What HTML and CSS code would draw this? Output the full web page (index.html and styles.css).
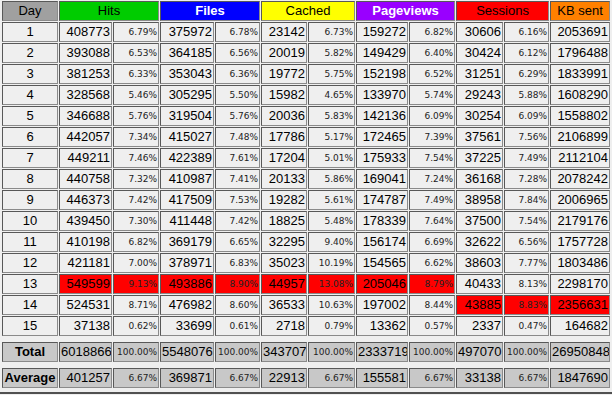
FILE: index.html
```html
<!DOCTYPE html>
<html>
<head>
<meta charset="utf-8">
<title>Daily Statistics</title>
<link rel="stylesheet" href="styles.css">
</head>
<body>
<div class="wrap">
<table class="stats">
<colgroup>
<col class="c-day"><col class="c-hn"><col class="c-hp"><col class="c-fn"><col class="c-fp"><col class="c-cn"><col class="c-cp"><col class="c-pn"><col class="c-pp"><col class="c-sn"><col class="c-sp"><col class="c-kb">
</colgroup>
<thead>
<tr>
<th class="h-day">Day</th>
<th colspan="2" class="h-hits">Hits</th>
<th colspan="2" class="h-files">Files</th>
<th colspan="2" class="h-cached">Cached</th>
<th colspan="2" class="h-pv">Pageviews</th>
<th colspan="2" class="h-sess">Sessions</th>
<th class="h-kb">KB sent</th>
</tr>
</thead>
<tbody>
<tr><td class="day">1</td><td class="n">408773</td><td class="p">6.79%</td><td class="n">375972</td><td class="p">6.78%</td><td class="n">23142</td><td class="p">6.73%</td><td class="n">159272</td><td class="p">6.82%</td><td class="n">30606</td><td class="p">6.16%</td><td class="n">2053691</td></tr>
<tr><td class="day">2</td><td class="n">393088</td><td class="p">6.53%</td><td class="n">364185</td><td class="p">6.56%</td><td class="n">20019</td><td class="p">5.82%</td><td class="n">149429</td><td class="p">6.40%</td><td class="n">30424</td><td class="p">6.12%</td><td class="n">1796488</td></tr>
<tr><td class="day">3</td><td class="n">381253</td><td class="p">6.33%</td><td class="n">353043</td><td class="p">6.36%</td><td class="n">19772</td><td class="p">5.75%</td><td class="n">152198</td><td class="p">6.52%</td><td class="n">31251</td><td class="p">6.29%</td><td class="n">1833991</td></tr>
<tr><td class="day">4</td><td class="n">328568</td><td class="p">5.46%</td><td class="n">305295</td><td class="p">5.50%</td><td class="n">15982</td><td class="p">4.65%</td><td class="n">133970</td><td class="p">5.74%</td><td class="n">29243</td><td class="p">5.88%</td><td class="n">1608290</td></tr>
<tr><td class="day">5</td><td class="n">346688</td><td class="p">5.76%</td><td class="n">319504</td><td class="p">5.76%</td><td class="n">20036</td><td class="p">5.83%</td><td class="n">142136</td><td class="p">6.09%</td><td class="n">30254</td><td class="p">6.09%</td><td class="n">1558802</td></tr>
<tr><td class="day">6</td><td class="n">442057</td><td class="p">7.34%</td><td class="n">415027</td><td class="p">7.48%</td><td class="n">17786</td><td class="p">5.17%</td><td class="n">172465</td><td class="p">7.39%</td><td class="n">37561</td><td class="p">7.56%</td><td class="n">2106899</td></tr>
<tr><td class="day">7</td><td class="n">449211</td><td class="p">7.46%</td><td class="n">422389</td><td class="p">7.61%</td><td class="n">17204</td><td class="p">5.01%</td><td class="n">175933</td><td class="p">7.54%</td><td class="n">37225</td><td class="p">7.49%</td><td class="n">2112104</td></tr>
<tr><td class="day">8</td><td class="n">440758</td><td class="p">7.32%</td><td class="n">410987</td><td class="p">7.41%</td><td class="n">20133</td><td class="p">5.86%</td><td class="n">169041</td><td class="p">7.24%</td><td class="n">36168</td><td class="p">7.28%</td><td class="n">2078242</td></tr>
<tr><td class="day">9</td><td class="n">446373</td><td class="p">7.42%</td><td class="n">417509</td><td class="p">7.53%</td><td class="n">19282</td><td class="p">5.61%</td><td class="n">174787</td><td class="p">7.49%</td><td class="n">38958</td><td class="p">7.84%</td><td class="n">2006965</td></tr>
<tr><td class="day">10</td><td class="n">439450</td><td class="p">7.30%</td><td class="n">411448</td><td class="p">7.42%</td><td class="n">18825</td><td class="p">5.48%</td><td class="n">178339</td><td class="p">7.64%</td><td class="n">37500</td><td class="p">7.54%</td><td class="n">2179176</td></tr>
<tr><td class="day">11</td><td class="n">410198</td><td class="p">6.82%</td><td class="n">369179</td><td class="p">6.65%</td><td class="n">32295</td><td class="p">9.40%</td><td class="n">156174</td><td class="p">6.69%</td><td class="n">32622</td><td class="p">6.56%</td><td class="n">1757728</td></tr>
<tr><td class="day">12</td><td class="n">421181</td><td class="p">7.00%</td><td class="n">378971</td><td class="p">6.83%</td><td class="n">35023</td><td class="p">10.19%</td><td class="n">154565</td><td class="p">6.62%</td><td class="n">38603</td><td class="p">7.77%</td><td class="n">1803486</td></tr>
<tr><td class="day">13</td><td class="n hi">549599</td><td class="p hi">9.13%</td><td class="n hi">493886</td><td class="p hi">8.90%</td><td class="n hi">44957</td><td class="p hi">13.08%</td><td class="n hi">205046</td><td class="p hi">8.79%</td><td class="n">40433</td><td class="p">8.13%</td><td class="n">2298170</td></tr>
<tr><td class="day">14</td><td class="n">524531</td><td class="p">8.71%</td><td class="n">476982</td><td class="p">8.60%</td><td class="n">36533</td><td class="p">10.63%</td><td class="n">197002</td><td class="p">8.44%</td><td class="n hi">43885</td><td class="p hi">8.83%</td><td class="n hi">2356631</td></tr>
<tr><td class="day">15</td><td class="n">37138</td><td class="p">0.62%</td><td class="n">33699</td><td class="p">0.61%</td><td class="n">2718</td><td class="p">0.79%</td><td class="n">13362</td><td class="p">0.57%</td><td class="n">2337</td><td class="p">0.47%</td><td class="n">164682</td></tr>
<tr class="spacer"><td colspan="12"></td></tr>
<tr class="sum"><td class="day lbl">Total</td><td class="n">6018866</td><td class="p">100.00%</td><td class="n">5548076</td><td class="p">100.00%</td><td class="n">343707</td><td class="p">100.00%</td><td class="n">2333719</td><td class="p">100.00%</td><td class="n">497070</td><td class="p">100.00%</td><td class="n">26950848</td></tr>
<tr class="spacer"><td colspan="12"></td></tr>
<tr class="sum"><td class="day lbl">Average</td><td class="n">401257</td><td class="p">6.67%</td><td class="n">369871</td><td class="p">6.67%</td><td class="n">22913</td><td class="p">6.67%</td><td class="n">155581</td><td class="p">6.67%</td><td class="n">33138</td><td class="p">6.67%</td><td class="n">1847690</td></tr>
</tbody>
</table>
</div>
</body>
</html>
```
FILE: styles.css
```css
html, body {
  margin: 0;
  padding: 0;
  background: #efefef;
}
.wrap {
  padding: 0 0 3px 1px;
  border-bottom: 2px solid #505050;
  width: 612px;
  box-sizing: border-box;
}
.stats {
  border-collapse: separate;
  border-spacing: 1px;
  table-layout: fixed;
  width: 610px;
  font-family: "Liberation Sans", Arial, sans-serif;
  font-size: 13px;
  color: #000;
}
.c-day { width: 56px; }
.c-hn { width: 53px; }
.c-hp { width: 46px; }
.c-fn { width: 54px; }
.c-fp { width: 45px; }
.c-cn { width: 46px; }
.c-cp { width: 47px; }
.c-pn { width: 52px; }
.c-pp { width: 46px; }
.c-sn { width: 47px; }
.c-sp { width: 45px; }
.c-kb { width: 60px; }
.stats th, .stats td {
  box-sizing: border-box;
  height: 20px;
  padding: 0 1px;
  border: 1px solid;
  border-color: #585858 #8a8a8a #8a8a8a #585858;
  background: #efefef;
  white-space: nowrap;
  overflow: hidden;
  line-height: 16px;
  vertical-align: middle;
}
.stats th {
  font-weight: normal;
  text-align: center;
}
.stats th.h-day { background: #a0a0a0; }
.stats th.h-hits { background: #00cc00; }
.stats th.h-files { background: #0000ff; color: #fff; font-weight: bold; }
.stats th.h-cached { background: #ffff00; }
.stats th.h-pv { background: #9900ff; color: #fff; font-weight: bold; }
.stats th.h-sess { background: #ff0000; }
.stats th.h-kb { background: #ff8000; }
.stats td.day { text-align: center; }
.stats td.n { text-align: right; }
.stats td.p {
  text-align: right;
  font-family: "DejaVu Sans", Verdana, sans-serif;
  font-size: 9px;
  color: #222;
}
.stats td.hi { background: #ff0000; }
.stats .sum td { background: #c8c8c8; }
.stats td.lbl { font-weight: bold; }
.stats .spacer td {
  height: 4px;
  padding: 0;
  border: 0;
  background: transparent;
  line-height: 0;
}
```
